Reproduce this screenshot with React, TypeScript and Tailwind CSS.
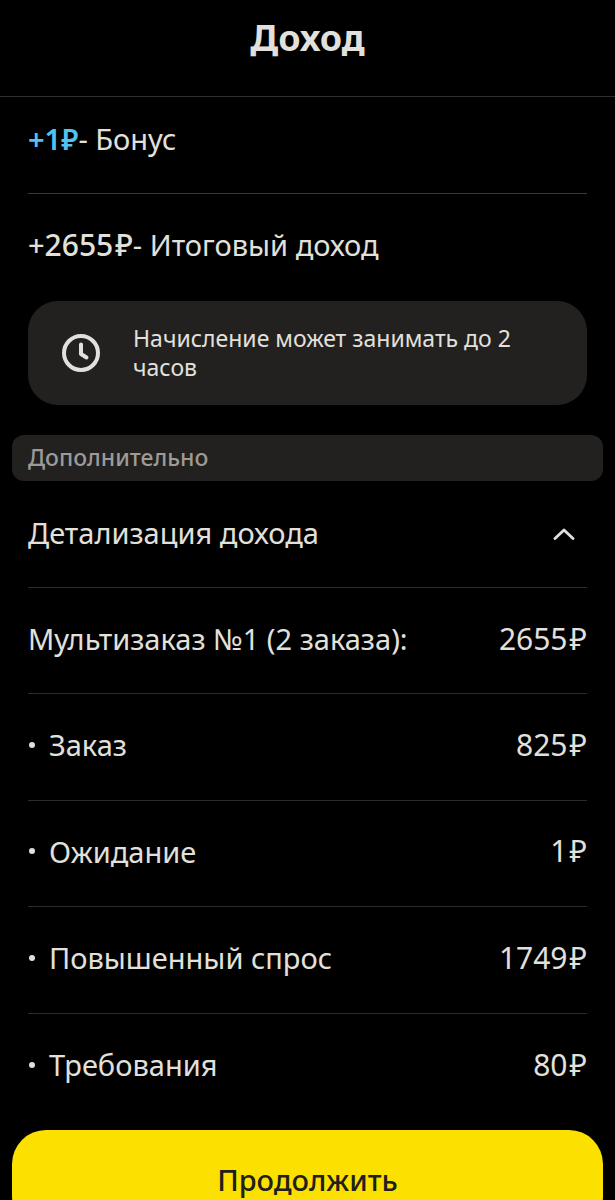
import { useState } from "react";

interface IncomeItem {
  label: string;
  amount: number;
}

const order = { label: "Мультизаказ №1 (2 заказа):", amount: 2655 };

const items: IncomeItem[] = [
  { label: "Заказ", amount: 825 },
  { label: "Ожидание", amount: 1 },
  { label: "Повышенный спрос", amount: 1749 },
  { label: "Требования", amount: 80 },
];

function ClockIcon() {
  return (
    <svg
      className="h-10 w-10 shrink-0"
      viewBox="0 0 40 40"
      fill="none"
      stroke="currentColor"
      strokeWidth="4"
      strokeLinecap="round"
      strokeLinejoin="round"
      aria-hidden="true"
    >
      <circle cx="20" cy="20" r="17" />
      <path d="M20 11.5v9.5l5.5 3.5" />
    </svg>
  );
}

function ChevronIcon({ open }: { open: boolean }) {
  return (
    <svg
      className={`mr-3 h-3 w-[22px] shrink-0 ${open ? "" : "rotate-180"}`}
      viewBox="0 0 22 12"
      fill="none"
      stroke="currentColor"
      strokeWidth="2.8"
      strokeLinecap="round"
      strokeLinejoin="round"
      aria-hidden="true"
    >
      <path d="M2 10.5l9-8.5 9 8.5" />
    </svg>
  );
}

function Amount({ value }: { value: number }) {
  return (
    <span className="text-3xl">
      {value}
      <span className="ml-0.5">₽</span>
    </span>
  );
}

export default function App() {
  const [open, setOpen] = useState(true);

  return (
    <div className="flex h-screen flex-col overflow-hidden bg-black font-['Noto_Sans','Open_Sans',sans-serif] text-[29px] text-[#e2e0dd]">
      <header className="flex h-[97px] shrink-0 justify-center border-b border-[#2e2e2e] pt-4">
        <h1 className="text-4xl leading-11 font-bold">Доход</h1>
      </header>

      <main className="shrink-0">
        {/* Totals */}
        <div className="mx-7">
          <p className="flex h-[97px] items-center border-b border-[#3a3a39] pb-3">
            <span className="font-semibold text-[#54c2f0]">+1₽</span>
            <span className="whitespace-pre">- Бонус</span>
          </p>
          <p className="flex h-[107px] items-center pb-1.5">
            <span className="font-medium">
              +<Amount value={2655} />
            </span>
            <span className="whitespace-pre">- Итоговый доход</span>
          </p>
          <div className="flex items-center rounded-[30px] bg-[#22211f] py-[23px] pr-7 pl-[33px] text-[23px] leading-[29px]">
            <ClockIcon />
            <p className="ml-8">Начисление может занимать до 2 часов</p>
          </div>
        </div>

        <h2 className="mx-3 mt-[30px] h-[46px] rounded-xl bg-[#22211f] px-4 text-[23px] leading-[44px] font-medium text-[#9d9a97]">
          Дополнительно
        </h2>

        {/* Income breakdown */}
        <div className="mx-7">
          <button
            type="button"
            aria-expanded={open}
            onClick={() => setOpen(!open)}
            className="flex h-[107px] w-full items-center justify-between border-b border-[#2c2c2b] text-left"
          >
            <span className="pb-0.5">Детализация дохода</span>
            <ChevronIcon open={open} />
          </button>

          {open && (
            <ul className="grid h-[532px] auto-rows-fr divide-y divide-[#2c2c2b]">
              <li className="flex items-center justify-between pb-1">
                <span>{order.label}</span>
                <Amount value={order.amount} />
              </li>
              {items.map((item) => (
                <li
                  key={item.label}
                  className="flex items-center justify-between pb-1"
                >
                  <span className="flex items-center">
                    <span className="mr-3.5 ml-px h-1.5 w-1.5 rounded-full bg-current"></span>
                    {item.label}
                  </span>
                  <Amount value={item.amount} />
                </li>
              ))}
            </ul>
          )}
        </div>
      </main>

      <footer className="mx-3 mt-2.5 shrink-0">
        <button
          type="button"
          className="h-25 w-full rounded-[34px] bg-[#fce000] font-medium text-[#21201f]"
        >
          Продолжить
        </button>
      </footer>
    </div>
  );
}
